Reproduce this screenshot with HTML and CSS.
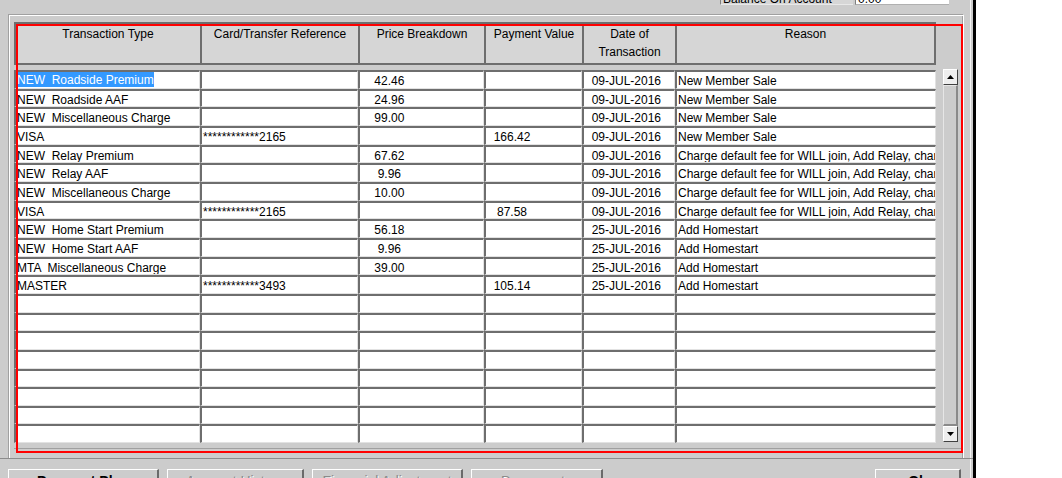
FILE: index.html
```html
<!DOCTYPE html>
<html>
<head>
<meta charset="utf-8">
<link rel="stylesheet" href="styles.css">
</head>
<body>
<div class="window">
  <div class="top">
    <div class="bal-label">Balance On Account</div>
    <div class="bal-field">0.00</div>
  </div>
  <div class="frame">
    <div class="table-wrap">
      <div class="grid-col">
        <div class="header">
          <div class="hcell">Transaction Type</div>
          <div class="hcell">Card/Transfer Reference</div>
          <div class="hcell">Price Breakdown</div>
          <div class="hcell">Payment Value</div>
          <div class="hcell">Date of<br>Transaction</div>
          <div class="hcell last">Reason</div>
        </div>
        <div class="rows">
          <div class="cell"><span class="sel">NEW  Roadside Premium</span></div><div class="cell"></div><div class="cell">    42.46</div><div class="cell"></div><div class="cell">  09-JUL-2016</div><div class="cell">New Member Sale</div>
          <div class="cell">NEW  Roadside AAF</div><div class="cell"></div><div class="cell">    24.96</div><div class="cell"></div><div class="cell">  09-JUL-2016</div><div class="cell">New Member Sale</div>
          <div class="cell">NEW  Miscellaneous Charge</div><div class="cell"></div><div class="cell">    99.00</div><div class="cell"></div><div class="cell">  09-JUL-2016</div><div class="cell">New Member Sale</div>
          <div class="cell">VISA</div><div class="cell">************2165</div><div class="cell"></div><div class="cell">  166.42</div><div class="cell">  09-JUL-2016</div><div class="cell">New Member Sale</div>
          <div class="cell">NEW  Relay Premium</div><div class="cell"></div><div class="cell">    67.62</div><div class="cell"></div><div class="cell">  09-JUL-2016</div><div class="cell">Charge default fee for WILL join, Add Relay, change cover</div>
          <div class="cell">NEW  Relay AAF</div><div class="cell"></div><div class="cell">     9.96</div><div class="cell"></div><div class="cell">  09-JUL-2016</div><div class="cell">Charge default fee for WILL join, Add Relay, change cover</div>
          <div class="cell">NEW  Miscellaneous Charge</div><div class="cell"></div><div class="cell">    10.00</div><div class="cell"></div><div class="cell">  09-JUL-2016</div><div class="cell">Charge default fee for WILL join, Add Relay, change cover</div>
          <div class="cell">VISA</div><div class="cell">************2165</div><div class="cell"></div><div class="cell">   87.58</div><div class="cell">  09-JUL-2016</div><div class="cell">Charge default fee for WILL join, Add Relay, change cover</div>
          <div class="cell">NEW  Home Start Premium</div><div class="cell"></div><div class="cell">    56.18</div><div class="cell"></div><div class="cell">  25-JUL-2016</div><div class="cell">Add Homestart</div>
          <div class="cell">NEW  Home Start AAF</div><div class="cell"></div><div class="cell">     9.96</div><div class="cell"></div><div class="cell">  25-JUL-2016</div><div class="cell">Add Homestart</div>
          <div class="cell">MTA  Miscellaneous Charge</div><div class="cell"></div><div class="cell">    39.00</div><div class="cell"></div><div class="cell">  25-JUL-2016</div><div class="cell">Add Homestart</div>
          <div class="cell">MASTER</div><div class="cell">************3493</div><div class="cell"></div><div class="cell">  105.14</div><div class="cell">  25-JUL-2016</div><div class="cell">Add Homestart</div>
          <div class="cell"></div><div class="cell"></div><div class="cell"></div><div class="cell"></div><div class="cell"></div><div class="cell"></div>
          <div class="cell"></div><div class="cell"></div><div class="cell"></div><div class="cell"></div><div class="cell"></div><div class="cell"></div>
          <div class="cell"></div><div class="cell"></div><div class="cell"></div><div class="cell"></div><div class="cell"></div><div class="cell"></div>
          <div class="cell"></div><div class="cell"></div><div class="cell"></div><div class="cell"></div><div class="cell"></div><div class="cell"></div>
          <div class="cell"></div><div class="cell"></div><div class="cell"></div><div class="cell"></div><div class="cell"></div><div class="cell"></div>
          <div class="cell"></div><div class="cell"></div><div class="cell"></div><div class="cell"></div><div class="cell"></div><div class="cell"></div>
          <div class="cell"></div><div class="cell"></div><div class="cell"></div><div class="cell"></div><div class="cell"></div><div class="cell"></div>
          <div class="cell"></div><div class="cell"></div><div class="cell"></div><div class="cell"></div><div class="cell"></div><div class="cell"></div>
        </div>
      </div>
      <div class="vscroll">
        <div class="sbtn"><svg width="7" height="4" viewBox="0 0 7 4"><polygon points="3.5,0 7,4 0,4" fill="#000"/></svg></div>
        <div class="thumb"></div>
        <div class="sbtn"><svg width="7" height="4" viewBox="0 0 7 4"><polygon points="0,0 7,0 3.5,4" fill="#000"/></svg></div>
      </div>
    </div>
  </div>
  <div class="separator"></div>
  <div class="buttons">
    <div class="btn b1 strong">Payment Plan</div>
    <div class="btn b2 disabled">Account History</div>
    <div class="btn b3 disabled">Financial Adjustment</div>
    <div class="btn b4 disabled">Documents</div>
    <div class="btn b5 strong">Ok</div>
  </div>
  <div class="highlight"></div>
</div>
</body>
</html>
```
FILE: styles.css
```css
html, body {
  margin: 0;
  padding: 0;
  background: #ffffff;
  overflow: hidden;
}
body {
  font-family: "Liberation Sans", Arial, sans-serif;
  font-size: 12px;
  color: #000;
}
.window {
  position: relative;
  width: 976px;
  height: 478px;
  box-sizing: border-box;
  background: #cccccc;
  border-right: 3px solid #000;
  box-shadow: inset -2px 0 0 #cccccc, inset -3px 0 0 #f4f4f4;
  overflow: hidden;
}
.top {
  height: 14px;
  display: flex;
  padding-left: 720px;
}
.bal-label {
  width: 133px;
  height: 17px;
  margin-top: -12px;
  box-sizing: border-box;
  background: #d6d6d6;
  border-left: 1px solid #808080;
  border-bottom: 1px solid #e8e8e8;
  padding: 4px 0 0 2px;
  line-height: 14px;
  white-space: nowrap;
  overflow: hidden;
}
.bal-field {
  width: 94px;
  height: 17px;
  margin: -12px 0 0 2px;
  box-sizing: border-box;
  background: #fff;
  border-left: 1px solid #808080;
  border-bottom: 1px solid #b0b0b0;
  padding: 4px 0 0 2px;
  line-height: 14px;
}
.frame {
  margin-left: 8px;
  width: 956px;
  height: 444px;
  box-sizing: border-box;
  border-top: 1px solid #a0a0a0;
  border-left: 1px solid #a0a0a0;
  border-right: 1px solid #ffffff;
  box-shadow: inset 1px 1px 0 #ffffff, inset -1px 0 0 #a0a0a0;
  padding: 7px 0 0 5px;
}
.table-wrap {
  width: 947px;
  height: 427px;
  box-sizing: border-box;
  border-bottom: 1px solid #a0a0a0;
  display: flex;
}
.grid-col {
  display: flex;
  flex-direction: column;
  gap: 5px;
}
.header {
  display: grid;
  grid-template-columns: 186px 158px 126px 98px 93px 261px;
  height: 43px;
}
.hcell {
  box-sizing: border-box;
  background: #d6d6d6;
  border: 2px solid #6e6e6e;
  border-right: none;
  text-align: center;
  line-height: 18px;
  padding-top: 1px;
  white-space: nowrap;
}
.hcell.last {
  border-right: 2px solid #6e6e6e;
}
.rows {
  display: grid;
  grid-template-columns: 186px 158px 126px 98px 93px 261px;
  grid-auto-rows: 18.667px;
}
.cell {
  box-sizing: border-box;
  background: #ffffff;
  border-top: 2px solid #6e6e6e;
  border-left: 2px solid #6e6e6e;
  border-right: 1px solid #e2e2e2;
  border-bottom: 1px solid #e2e2e2;
  padding: 1px 0 0 1px;
  white-space: pre;
  overflow: hidden;
  line-height: 16px;
}
.sel {
  display: inline-block;
  background: #3399ff;
  color: #ffffff;
  height: 15px;
  line-height: 17px;
  vertical-align: top;
  margin-top: -1px;
}
.vscroll {
  margin-left: 7px;
  margin-top: 47px;
  width: 15px;
  height: 373px;
  display: flex;
  flex-direction: column;
}
.sbtn {
  height: 16px;
  box-sizing: border-box;
  background: #eeeeee;
  border-top: 1px solid #ffffff;
  border-left: 1px solid #ffffff;
  border-right: 1px solid #404040;
  border-bottom: 1px solid #404040;
  display: flex;
  align-items: center;
  justify-content: center;
}
.thumb {
  flex: 1;
  box-sizing: border-box;
  background: #cccccc;
  border-top: 1px solid #e6e6e6;
  border-left: 1px solid #e6e6e6;
  border-right: 2px solid #8a8a8a;
  border-bottom: 2px solid #8a8a8a;
}
.separator {
  height: 1px;
  background: #8c8c8c;
}
.buttons {
  display: flex;
  padding-left: 8px;
  margin-top: 10px;
  gap: 8px;
}
.btn {
  height: 24px;
  box-sizing: border-box;
  background: #cccccc;
  border-top: 1px solid #ffffff;
  border-left: 1px solid #ffffff;
  border-right: 2px solid #6a6a6a;
  border-bottom: 2px solid #6a6a6a;
  font-size: 14px;
  line-height: 16px;
  padding-top: 3px;
  text-align: center;
  white-space: nowrap;
}
.b1 { width: 151px; }
.b2 { width: 137px; }
.b3 { width: 151px; }
.b4 { width: 132px; }
.b5 { width: 86px; margin-left: auto; margin-right: 12px; }
.strong { font-weight: bold; }
.disabled {
  color: #8a8a8a;
  text-shadow: 1px 1px 0 #ffffff;
}
.highlight {
  position: absolute;
  left: 16px;
  top: 24px;
  width: 947px;
  height: 429px;
  box-sizing: border-box;
  border: 2px solid #ff0000;
  pointer-events: none;
}
```
